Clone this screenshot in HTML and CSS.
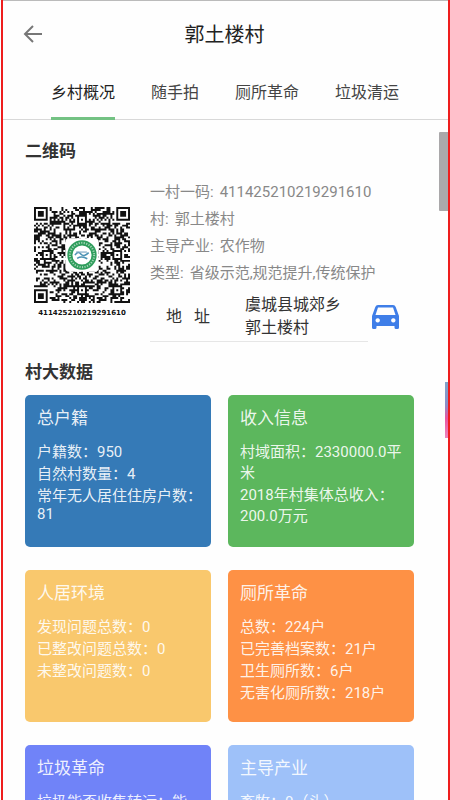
FILE: index.html
```html
<!doctype html>
<html lang="zh-CN">
    <head>
        <meta charset="utf-8">
        <meta name="viewport" content="width=device-width, initial-scale=1">
        <title>郭土楼村</title>
        <link rel="stylesheet" href="styles.css">
    </head>
    <body>
        <div class="frame">
            <header class="topbar">
                <button class="back" type="button" aria-label="返回">
                    <svg width="20" height="20" viewBox="0 0 20 20">
                        <path d="M19 9H2M10 1L2 9l8 8" fill="none" stroke="#777" stroke-width="2"/>
                    </svg>
                </button>
                <h1>郭土楼村</h1>
            </header>
            <nav class="tabs">
                <button class="tab active" type="button">乡村概况</button>
                <button class="tab" type="button">随手拍</button>
                <button class="tab" type="button">厕所革命</button>
                <button class="tab" type="button">垃圾清运</button>
            </nav>
            <main>
                <h2>二维码</h2>
                <section class="village">
                    <figure class="code">
                        <svg id="qr" viewBox="0 0 49 49">
                            <path id="modules" fill="#111"/>
                            <!-- Badge in the middle -->
                            <rect x="16" y="16" width="17" height="17" rx="2" fill="#fff"/>
                            <circle cx="24.5" cy="24.5" r="6.2" fill="#fff" stroke="#2f9d5c" stroke-width="2.6"/>
                            <circle cx="24.5" cy="24.5" r="6.2" fill="none" stroke="#a5d8b7" stroke-width="1" stroke-dasharray="0.6 0.7"/>
                            <path d="M20.9 24.6q1.5-2.4 3-.6t4-.7M22 26.2q2.5-1.4 5.2.2" fill="none" stroke="#4d93b5" stroke-width="0.8"/>
                            <path d="M21.5 23h5.5" fill="none" stroke="#7fa8c4" stroke-width="0.6"/>
                        </svg>
                        <figcaption>411425210219291610</figcaption>
                    </figure>
                    <div class="info">
                        <dl>
                            <div><dt>一村一码:</dt><dd>411425210219291610</dd></div>
                            <div><dt>村:</dt><dd>郭土楼村</dd></div>
                            <div><dt>主导产业:</dt><dd>农作物</dd></div>
                            <div><dt>类型:</dt><dd>省级示范,规范提升,传统保护</dd></div>
                        </dl>
                        <div class="place">
                            <div class="address">
                                <span class="label"><span>地</span><span>址</span></span>
                                <span class="value">虞城县城郊乡<br>郭土楼村</span>
                            </div>
                            <a class="car" href="#map" aria-label="导航">
                                <svg width="27" height="24" viewBox="0 0 27 24">
                                    <path fill="#3f7ee8" fill-rule="evenodd" d="M6 0h15q2 0 2.700 2L27 11v11.500q0 1.500-1.500 1.500h-1.500q-1.500 0-1.500-1.500V21h-18v1.500Q4.500 24 3 24H1.500Q0 24 0 22.500V11L3.300 2Q4 0 6 0zM6 2.500L3.500 10h20L21 2.500zM5.700 13.200a2.200 2.200 0 1 0 .01 0zM21.300 13.200a2.200 2.200 0 1 0 .01 0z"/>
                                </svg>
                            </a>
                        </div>
                    </div>
                </section>
                <h2>村大数据</h2>
                <section class="cards">
                    <article class="card blue">
                        <h3>总户籍</h3>
                        <p>户籍数：950</p>
                        <p>自然村数量：4</p>
                        <p>常年无人居住住房户数：81</p>
                    </article>
                    <article class="card green">
                        <h3>收入信息</h3>
                        <p>村域面积：2330000.0平米</p>
                        <p>2018年村集体总收入：200.0万元</p>
                    </article>
                    <article class="card yellow">
                        <h3>人居环境</h3>
                        <p>发现问题总数：0</p>
                        <p>已整改问题总数：0</p>
                        <p>未整改问题数：0</p>
                    </article>
                    <article class="card orange">
                        <h3>厕所革命</h3>
                        <p>总数：224户</p>
                        <p>已完善档案数：21户</p>
                        <p>卫生厕所数：6户</p>
                        <p>无害化厕所数：218户</p>
                    </article>
                    <article class="card indigo">
                        <h3>垃圾革命</h3>
                        <p>垃圾能否收集转运：能</p>
                    </article>
                    <article class="card sky">
                        <h3>主导产业</h3>
                        <p>畜牧：0（头）</p>
                    </article>
                </section>
                <div class="thumb"></div>
                <div class="float"></div>
            </main>
        </div>
        <script src="qr.js"></script>
    </body>
</html>
```
FILE: styles.css
```css
* {
    box-sizing: border-box;
    margin: 0;
    padding: 0;
}
body {
    font-family: Roboto, "Noto Sans CJK SC", sans-serif;
    background-color: #fefefe;
    color: #333;
    padding-left: 1px;
}
button {
    font: inherit;
    color: inherit;
    background: none;
    border: 0;
}
svg {
    display: block;
}
.frame {
    display: flex;
    flex-direction: column;
    height: 100vh;
    overflow: hidden;
    border: solid #ee1d1d;
    border-width: 0 2px;
}

/* Title bar and tabs */
.topbar {
    display: grid;
    grid-template-columns: 20px 1fr 20px;
    align-items: center;
    flex: none;
    height: 68px;
    padding: 0 22px 0 20px;
    border-top: 1px solid #bbb;
}
h1 {
    font-size: 20px;
    font-weight: normal;
    line-height: 28px;
    text-align: center;
    color: #222;
}
.tabs {
    display: flex;
    justify-content: center;
    flex: none;
    gap: 36px;
    padding: 13px 1px 0 0;
    border-bottom: 1px solid #d8d8d8;
}
.tab {
    font-size: 16px;
    line-height: 24px;
    padding-bottom: 12px;
    margin-bottom: -1px;
    border-bottom: 3px solid transparent;
    color: #444;
}
.active {
    color: #222;
    border-color: #73c283;
}

/* Village details */
main {
    position: relative;
    flex: 1;
    min-height: 0;
    overflow: hidden;
    padding: 19px 34px 0 22px;
}
h2 {
    font-size: 17px;
    line-height: 24px;
}
.village {
    display: flex;
    margin: 15px 0 18px;
}
.code {
    flex: none;
    width: 125px;
    padding: 29px 20px 0 9px;
}
figcaption {
    font: bold 7px/20px "DejaVu Sans", sans-serif;
    text-align: center;
    color: #111;
}
.info {
    flex: 1;
}
dl {
    padding-top: 1px;
    font-size: 15px;
    line-height: 27px;
    color: #888;
}
dl div {
    display: flex;
    gap: 6px;
}
.place {
    display: flex;
    align-items: center;
    gap: 4px;
}
.address {
    display: flex;
    align-items: center;
    flex: 0 1 218px;
    padding: 6px 0 2px 16px;
    border-bottom: 1px solid #e6e6e6;
    font-size: 16px;
    line-height: 23px;
}
.label {
    display: flex;
    gap: 12px;
    width: 79px;
}
.car {
    padding-top: 5px;
}

/* Data cards */
.cards {
    display: grid;
    grid-template-columns: 1fr 1fr;
    gap: 23px 17px;
    margin-top: 11px;
}
.card {
    min-height: 152px;
    padding: 9px 8px 9px 12px;
    border-radius: 5px;
    font-size: 15px;
    color: rgba(255, 255, 255, 0.9);
}
.card h3 {
    font-size: 17px;
    font-weight: normal;
    margin-bottom: 11px;
}
.card p {
    margin-bottom: 1px;
}
.blue { background-color: #357ab7; }
.green { background-color: #5cb75d; }
.yellow { background-color: #f9c86d; }
.orange { background-color: #fe9145; }
.indigo { background-color: #7083f8; }
.sky { background-color: #9ec1f9; }

/* Scroll thumb and the edge of the floating ball */
.thumb, .float {
    position: absolute;
    right: 0;
}
.thumb {
    top: 12px;
    width: 9px;
    height: 79px;
    border-radius: 1px 0 0 1px;
    background-color: #aaa8aa;
}
.float {
    top: 262px;
    width: 3px;
    height: 56px;
    background: linear-gradient(#7fa3c9, #8a8fc8 40%, #e8559f 65%, #ee86bd);
}
```
FILE: qr.js
```js
// Draws the modules of a 49x49 code (version 8)
var n = 49
var seed = 4114252

function next() {
    seed = (seed * 1103515245 + 12345) % 2147483648
    return seed / 2147483648
}

// Square patterns: dark except for the ring at distance gap, null outside
function square(x, y, cx, cy, size, gap) {
    var d = Math.max(Math.abs(x - cx), Math.abs(y - cy))
    if (d > size) return null
    return d !== gap && d !== 4
}

function dark(x, y) {
    var finders = [[3, 3], [n - 4, 3], [3, n - 4]]
    for (var i = 0; i < finders.length; i++) {
        var f = square(x, y, finders[i][0], finders[i][1], 4, 2)
        if (f !== null) return f
    }
    var marks = [[24, 6], [6, 24], [42, 24], [24, 42], [42, 42]]
    for (var j = 0; j < marks.length; j++) {
        var m = square(x, y, marks[j][0], marks[j][1], 2, 1)
        if (m !== null) return m
    }
    // Timing lines
    if (x === 6 || y === 6) return (x + y) % 2 === 0
    return next() < 0.5
}

var d = ''
for (var y = 0; y < n; y++) {
    for (var x = 0; x < n; x++) {
        if (dark(x, y)) d += 'M' + x + ' ' + y + 'h1v1h-1z'
    }
}
document.getElementById('modules').setAttribute('d', d)
```
